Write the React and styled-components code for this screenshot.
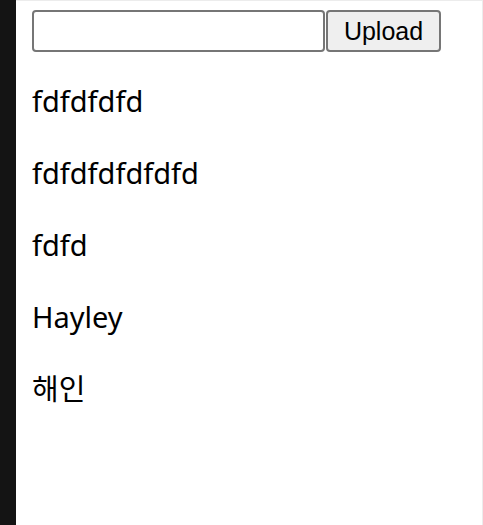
import React, { useState } from "react";
import styled, { createGlobalStyle } from "styled-components";

const GlobalStyle = createGlobalStyle`
    html, body {
        margin: 0;
        padding: 0;
        background: #ffffff;
    }
    #root {
        height: 100vh;
    }
`;

const Page = styled.div`
    display: flex;
    height: 100vh;
    box-sizing: border-box;
`;

const SideBar = styled.div`
    width: 16px;
    flex-shrink: 0;
    background: #141414;
`;

const Main = styled.div`
    flex: 1;
    padding: 9px 16px 0 16px;
    border-top: 1px solid #ececec;
    border-right: 1px solid #ececec;
    display: flex;
    flex-direction: column;
`;

const UploadRow = styled.div`
    display: flex;
    align-items: stretch;
    gap: 1px;
    height: 42px;
`;

const TextInput = styled.input`
    width: 293px;
    box-sizing: border-box;
    height: 42px;
    border: 2px solid #767676;
    border-radius: 4px;
    padding: 0 6px;
    font-size: 22px;
    font-family: "Liberation Sans", Arial, sans-serif;
    background: #fff;
    outline: none;
`;

const UploadButton = styled.button`
    width: 115px;
    height: 42px;
    box-sizing: border-box;
    border: 2px solid #767676;
    border-radius: 4px;
    background: #efefef;
    color: #000;
    font-size: 25px;
    font-family: "Liberation Sans", Arial, sans-serif;
    padding: 0;
`;

const NameList = styled.div`
    display: flex;
    flex-direction: column;
    margin-top: 27px;
    gap: 28px;
`;

const Name = styled.p`
    margin: 0;
    font-family: "Noto Sans", "Noto Sans CJK KR", sans-serif;
    font-size: 29px;
    line-height: 44px;
    color: #000;
`;

const App = () => {
    const [text, setText] = useState("");
    const names = ["fdfdfdfd", "fdfdfdfdfdfd", "fdfd", "Hayley", "해인"];

    return (
        <>
            <GlobalStyle />
            <Page>
                <SideBar />
                <Main>
                    <UploadRow>
                        <TextInput
                            type="text"
                            value={text}
                            onChange={(event) => setText(event.target.value)}
                        />
                        <UploadButton>Upload</UploadButton>
                    </UploadRow>
                    <NameList>
                        {names.map((name, i) => (
                            <Name key={i}>{name}</Name>
                        ))}
                    </NameList>
                </Main>
            </Page>
        </>
    );
};

export default App;
